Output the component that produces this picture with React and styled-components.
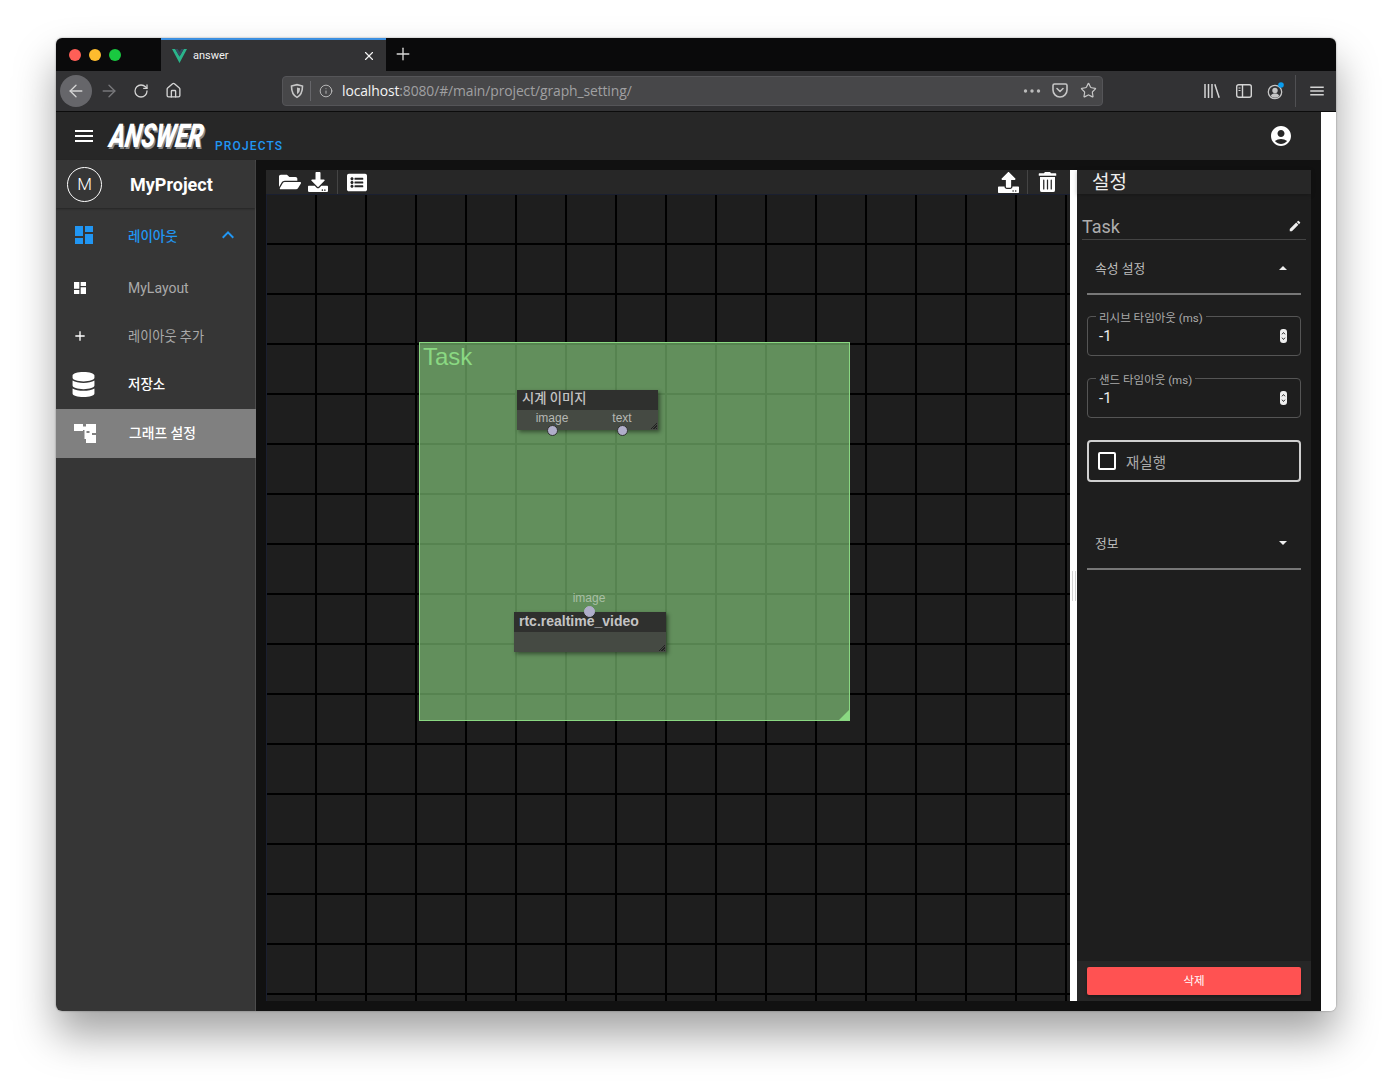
import React from 'react';
import styled, { createGlobalStyle } from 'styled-components';
import { ArrowLeft, ArrowRight, RotateCw, House, Star, Info, X, Plus } from 'lucide-react';
import { FaFolderOpen, FaDownload, FaUpload, FaListAlt, FaTrashAlt, FaDatabase } from 'react-icons/fa';
import { MdDashboard, MdExpandLess, MdAdd, MdAccountCircle, MdEdit, MdMenu } from 'react-icons/md';

const SANS = `Roboto, "Noto Sans CJK KR", sans-serif`;

const GlobalStyle = createGlobalStyle`
  html, body {
    margin: 0;
    background: #fff;
  }
  * {
    box-sizing: border-box;
  }
`;

const Page = styled.div`
  width: 1392px;
  height: 1085px;
  padding: 38px 56px 74px;
  background: #fff;
  font-family: ${SANS};
  overflow: hidden;
`;

const Win = styled.div`
  height: 973px;
  display: flex;
  flex-direction: column;
  border-radius: 6px;
  overflow: hidden;
  background: #fff;
  box-shadow: 0 24px 42px rgba(0, 0, 0, 0.36), 0 0 2px rgba(0, 0, 0, 0.4);
`;

const TabStrip = styled.div`
  height: 33px;
  flex: none;
  display: flex;
  align-items: stretch;
  background: #0a0a0b;
`;

const Lights = styled.div`
  width: 105px;
  padding-left: 13px;
  display: flex;
  align-items: center;
  gap: 8px;
`;

const Light = styled.span`
  width: 12px;
  height: 12px;
  border-radius: 50%;
  background: ${(p) => p.$color};
`;

const Tab = styled.div`
  width: 225px;
  display: flex;
  align-items: center;
  padding: 0 10px 0 11px;
  background: #323234;
  border-top: 2px solid #3c8fe0;
  color: #f2f2f2;
  font-size: 11px;
`;

const TabTitle = styled.span`
  margin-left: 6px;
  flex: 1;
`;

const NewTab = styled.div`
  width: 34px;
  padding-bottom: 2px;
  display: flex;
  align-items: center;
  justify-content: center;
  color: #d8d8d8;
`;

const NavBar = styled.div`
  height: 41px;
  flex: none;
  display: flex;
  align-items: center;
  padding: 0 0 1px 4px;
  background: #323234;
  border-bottom: 1px solid #0c0c0c;
`;

const NavButton = styled.div`
  width: ${(p) => p.$w || 32}px;
  height: 32px;
  margin-right: ${(p) => p.$gap || 0}px;
  flex: none;
  display: flex;
  align-items: center;
  justify-content: center;
  border-radius: 50%;
  color: ${(p) => (p.$dim ? '#77777a' : '#d4d4d4')};
  background: ${(p) => (p.$active ? '#66666a' : 'transparent')};
`;

const UrlBar = styled.div`
  width: 821px;
  height: 30px;
  margin: 0 93px 0 93px;
  flex: none;
  display: flex;
  align-items: center;
  padding-left: 6px;
  background: #474749;
  border: 1px solid #555558;
  border-radius: 4px;
  color: #c6c6c6;
`;

const UrlSep = styled.span`
  width: 1px;
  height: 20px;
  margin: 0 8px 0 5px;
  background: #66666a;
`;

const UrlText = styled.div`
  flex: 1;
  margin-left: 9px;
  font-family: "Open Sans", ${SANS};
  font-size: 13.9px;
  letter-spacing: -0.1px;
  color: #a0a0a2;
`;

const UrlHost = styled.span`
  color: #f4f4f4;
`;

const NavSep = styled.span`
  width: 1px;
  height: 32px;
  margin: 0 5px 0 3px;
  background: #505053;
`;

const Body = styled.div`
  flex: 1;
  min-height: 0;
  display: flex;
`;

const AppFrame = styled.div`
  width: 1265px;
  display: flex;
  flex-direction: column;
`;

const AppBar = styled.header`
  height: 48px;
  flex: none;
  display: flex;
  align-items: center;
  padding: 0 28px 0 16px;
  background: #272727;
  color: #fff;
`;

const Logo = styled.span`
  display: inline-block;
  width: 97px;
  margin-left: 14px;
  font-family: Roboto, sans-serif;
  font-size: 31px;
  font-weight: 900;
  font-style: italic;
  line-height: 32px;
  color: #fff;
  white-space: nowrap;
  transform: skewX(-8deg) scaleX(0.76) scaleY(1.06);
  transform-origin: left center;
  text-shadow: 2px 2px 0 #8a8a8a;
`;

const LogoSub = styled.span`
  margin: 20px 0 0 8px;
  font-size: 12px;
  font-weight: 500;
  letter-spacing: 1.15px;
  color: #2196f3;
`;

const Spacer = styled.div`
  flex: 1;
`;

const Columns = styled.div`
  flex: 1;
  min-height: 0;
  display: flex;
`;

const Sidebar = styled.aside`
  width: 200px;
  flex: none;
  background: #363636;
  border-right: 1px solid #4c4c4c;
  color: #fff;
`;

const ProjectRow = styled.div`
  height: 48px;
  display: flex;
  align-items: center;
  padding-left: 11px;
  box-shadow: 0 1px 2px rgba(0, 0, 0, 0.35);
`;

const Avatar = styled.div`
  width: 35px;
  height: 35px;
  display: flex;
  align-items: center;
  justify-content: center;
  border: 1px solid #fff;
  border-radius: 50%;
  font-size: 17px;
  font-weight: 300;
`;

const ProjectName = styled.div`
  margin-left: 28px;
  font-size: 18px;
  font-weight: 700;
`;

const MenuGroup = styled.nav`
  padding-top: 3px;
`;

const MenuRow = styled.div`
  height: ${(p) => p.$h || 48}px;
  padding-top: ${(p) => p.$pt || 0}px;
  margin-right: ${(p) => (p.$active ? -1 : 0)}px;
  display: flex;
  align-items: center;
  font-size: ${(p) => p.$size || 13.5}px;
  font-weight: ${(p) => (p.$strong ? 500 : 400)};
  color: ${(p) => p.$color || '#fff'};
  background: ${(p) => (p.$active ? '#808080' : 'transparent')};
`;

const MenuIcon = styled.span`
  width: ${(p) => p.$w || 72}px;
  padding-left: ${(p) => p.$pad || 18}px;
  flex: none;
  display: flex;
  align-items: center;
  color: ${(p) => p.$color || '#fff'};
`;

const MenuLabel = styled.span`
  flex: 1;
  padding-bottom: ${(p) => p.$lift || 0}px;
`;

const Chevron = styled.span`
  width: 39px;
  display: flex;
  color: #2196f3;
`;

const Main = styled.main`
  flex: 1;
  min-width: 0;
  display: flex;
  padding: 10px;
  background: #111;
`;

const Editor = styled.section`
  width: 804px;
  flex: none;
  display: flex;
  flex-direction: column;
`;

const Toolbar = styled.div`
  height: 24px;
  flex: none;
  display: flex;
  align-items: center;
  padding: 0 13px;
  background: #272727;
  color: #fff;
`;

const ToolButton = styled.span`
  display: flex;
  align-items: center;
  justify-content: center;
  width: ${(p) => p.$w}px;
`;

const ToolSep = styled.span`
  width: 1px;
  height: 24px;
  margin: 0 ${(p) => p.$right}px 0 ${(p) => p.$left}px;
  background: #444;
`;

const Canvas = styled.div`
  flex: 1;
  position: relative;
  overflow: hidden;
  background-color: #1e1e1e;
  background-image: linear-gradient(to right, #000 2px, transparent 2px),
    linear-gradient(to bottom, #000 2px, transparent 2px);
  background-size: 50px 50px;
  background-position: 48px 0, 0 48px;
  border-top: 1px solid #1a1f30;
  border-left: 1px solid #1a1f30;
`;

const Group = styled.div`
  position: absolute;
  left: 152px;
  top: 147px;
  width: 431px;
  height: 379px;
  padding: 0 3px;
  background: rgba(143, 218, 133, 0.6);
  border: 1px solid #8ad882;
  color: #8ad882;
  font-family: "Liberation Sans", sans-serif;
  font-size: 24px;
  line-height: 28px;

  &::after {
    content: '';
    position: absolute;
    right: 0;
    bottom: 0;
    border-style: solid;
    border-width: 0 0 10px 10px;
    border-color: transparent transparent #8ad882 transparent;
  }
`;

const Node = styled.div`
  position: absolute;
  left: ${(p) => p.$x}px;
  top: ${(p) => p.$y}px;
  width: ${(p) => p.$w}px;
  height: 40px;
  box-shadow: 2px 2px 4px rgba(0, 0, 0, 0.45);
  font-family: "Liberation Sans", "Noto Sans CJK KR", sans-serif;

  &::after {
    content: '';
    position: absolute;
    right: 1px;
    bottom: 1px;
    width: 7px;
    height: 7px;
    background: repeating-linear-gradient(135deg, transparent 0 1px, #222 1px 2px);
    clip-path: polygon(100% 0, 100% 100%, 0 100%);
  }
`;

const NodeTitle = styled.div`
  height: 20px;
  padding-left: 5px;
  background: #2f302e;
  color: #c4c4c4;
  font-family: ${(p) => (p.$ko ? SANS : 'inherit')};
  font-size: ${(p) => p.$size || 14}px;
  font-weight: ${(p) => (p.$ko ? 500 : 700)};
  line-height: ${(p) => (p.$ko ? 17 : 19)}px;
  white-space: nowrap;
`;

const NodeBody = styled.div`
  height: 20px;
  background: #454a43;
`;

const Port = styled.div`
  position: absolute;
  z-index: 1;
  left: ${(p) => p.$x}px;
  top: ${(p) => p.$y}px;
  width: 0;
  color: ${(p) => p.$color || '#b5b8b3'};
  font-size: 12px;
  line-height: 14px;
  display: flex;
  flex-direction: column;
  align-items: center;
  white-space: nowrap;
  transform: translateY(${(p) => (p.$in ? '-100%' : '0')});

  &::after {
    content: '';
    flex: none;
    width: 9px;
    height: 9px;
    border-radius: 50%;
    background: #b0aeca;
    border: 1px solid ${(p) => (p.$in ? '#b0aeca' : '#30332f')};
  }
`;

const PortLabel = styled.span`
  margin-bottom: ${(p) => p.$gap || 0}px;
`;

const Divider = styled.div`
  width: 7px;
  flex: none;
  display: flex;
  align-items: center;
  justify-content: center;
  background: #fff;
`;

const Grip = styled.span`
  width: 4px;
  height: 30px;
  border-left: 1px solid #d4d4d4;
  border-right: 1px solid #d4d4d4;
`;

const Panel = styled.section`
  width: 234px;
  flex: none;
  display: flex;
  flex-direction: column;
  background: #1e1e1e;
  color: #fff;
`;

const PanelHead = styled.div`
  height: 24px;
  flex: none;
  padding-left: 15px;
  background: #272727;
  font-size: 19px;
  line-height: 25px;
  color: #eee;
  box-shadow: 0 1px 4px rgba(0, 0, 0, 0.25);
`;

const PanelBody = styled.div`
  flex: 1;
  padding: 0 10px;
`;

const TaskRow = styled.div`
  height: 46px;
  margin: 0 -5px;
  padding: 19px 4px 0 0;
  display: flex;
  align-items: center;
  justify-content: space-between;
  border-bottom: 1px solid #444;
  color: #adadad;
  font-size: 18px;
`;

const EditIcon = styled.span`
  display: flex;
  margin-top: -1px;
  color: #eee;
`;

const SectionHead = styled.div`
  height: 55px;
  display: flex;
  align-items: center;
  justify-content: space-between;
  padding: 2px 14px 0 8px;
  border-bottom: 2px solid #777;
  color: #bdbdbd;
  font-size: 12.8px;
`;

const Caret = styled.span`
  width: 0;
  height: 0;
  border-left: 4px solid transparent;
  border-right: 4px solid transparent;
  ${(p) => (p.$up ? 'border-bottom: 4px solid #eee;' : 'border-top: 4px solid #eee;')}
`;

const Field = styled.fieldset`
  height: 48px;
  margin: ${(p) => p.$top}px 0 0;
  padding: 0 13px 0 8px;
  display: flex;
  align-items: center;
  justify-content: space-between;
  border: 1px solid #555;
  border-radius: 4px;
`;

const Legend = styled.legend`
  padding: 4px 3px 0;
  color: #aaa;
  font-size: 11.5px;
  line-height: 12px;
`;

const FieldRow = styled.div`
  display: flex;
  align-items: center;
  justify-content: space-between;
  width: 100%;
  height: 32px;
  margin-top: -7px;
  padding-left: 3px;
  font-size: 15px;
  color: #eee;
`;

const CheckField = styled.label`
  height: 42px;
  margin-top: 22px;
  display: flex;
  align-items: center;
  padding-left: 9px;
  border: 2px solid #cfcfcf;
  border-radius: 4px;
  color: #aaa;
  font-size: 14.5px;
`;

const CheckBox = styled.span`
  width: 18px;
  height: 18px;
  margin-right: 10px;
  border: 2px solid #fff;
  border-radius: 2px;
`;

const InfoHead = styled(SectionHead)`
  margin-top: 33px;
`;

const PanelFoot = styled.div`
  height: 40px;
  flex: none;
  padding: 6px 10px;
  background: #272727;
`;

const DeleteButton = styled.button`
  width: 100%;
  height: 28px;
  padding: 0 0 2px;
  border: 0;
  border-radius: 2px;
  background: #ff5252;
  color: #fff;
  font-family: ${SANS};
  font-size: 11.5px;
  box-shadow: 0 2px 3px rgba(0, 0, 0, 0.3);
`;

const ScrollGutter = styled.div`
  flex: 1;
  background: #fff;
`;

const VueLogo = () => (
  <svg width="15" height="14" viewBox="0 0 15 14">
    <path d="M0 0h3.2l4.3 7.6L11.8 0H15L7.5 14z" fill="#2bb48a" />
    <path d="M3.2 0h2.6l1.7 3 1.7-3h2.6L7.5 7.6z" fill="#35495e" />
  </svg>
);

const ShieldIcon = () => (
  <svg width="16" height="16" viewBox="0 0 16 16" fill="none" stroke="#c6c6c6" strokeWidth="1.6">
    <path d="M2.5 3 8 1.6 13.5 3c0 5-.8 9-5.500 11.400C3.300 12 2.500 8 2.500 3z" />
    <path d="M8 4.500 11 5.300c0 2.700-.7 4.500-3 6z" fill="#c6c6c6" stroke="none" />
  </svg>
);

const MoreDots = () => (
  <svg width="18" height="4" viewBox="0 0 18 4" fill="#bbb">
    <circle cx="2.500" cy="2" r="1.700" />
    <circle cx="9" cy="2" r="1.700" />
    <circle cx="15.500" cy="2" r="1.700" />
  </svg>
);

const PocketIcon = () => (
  <svg width="16" height="15" viewBox="0 0 16 15" fill="none" stroke="#c6c6c6" strokeWidth="1.6">
    <path d="M1 2.500C1 1.500 1.600 1 2.500 1h11c.9 0 1.500.5 1.500 1.500V7c0 3.700-3 7-7 7S1 10.700 1 7z" />
    <path d="M5 5.500 8 8.500l3-3" strokeLinecap="round" strokeLinejoin="round" />
  </svg>
);

const LibraryIcon = () => (
  <svg width="16" height="14" viewBox="0 0 16 14" stroke="#d4d4d4" strokeWidth="1.500" fill="none">
    <path d="M1 0v14M4.500 0v14M8 0v14M10.800.3 15.200 13.800" />
  </svg>
);

const SidebarIcon = () => (
  <svg width="16" height="14" viewBox="0 0 16 14" fill="none" stroke="#d4d4d4" strokeWidth="1.400">
    <rect x="0.700" y="0.700" width="14.600" height="12.600" rx="2" />
    <path d="M6.500 1v12" />
    <path d="M2.500 4h2M2.500 6.500h2" strokeWidth="1" />
  </svg>
);

const AccountIcon = () => (
  <svg width="20" height="20" viewBox="0 0 20 20" fill="none">
    <circle cx="9" cy="11" r="6.700" stroke="#c6c6c6" strokeWidth="1.300" />
    <circle cx="9" cy="9.500" r="2.700" fill="#c6c6c6" />
    <path d="M4.800 14.800C5.500 12.900 7 12.400 9 12.400s3.500.5 4.200 2.400C12 16.200 10.500 16.700 9 16.700s-3-.5-4.200-1.900z" fill="#c6c6c6" />
    <circle cx="15" cy="4" r="2.800" fill="#0a9ef0" />
  </svg>
);

const GraphIcon = () => (
  <svg width="22" height="19" viewBox="0 0 22 19" fill="#fff">
    <path d="M0 0h9v2.500h3V0h10v9h-4v2h4v8H12v-4h-1.500V6H9v1H0zM12 4.500v2H12.500V9h3V7H12z" />
  </svg>
);

const SpinnerIcon = () => (
  <svg width="7" height="14" viewBox="0 0 7 14">
    <rect width="7" height="14" rx="3" fill="#eee" />
    <path d="M2 5.300 3.500 3.500 5 5.300M2 8.700 3.500 10.500 5 8.700" fill="none" stroke="#333" strokeWidth="1" />
  </svg>
);

const NumberField = ({ label, top }) => (
  <Field $top={top}>
    <Legend>{label}</Legend>
    <FieldRow>
      -1
      <SpinnerIcon />
    </FieldRow>
  </Field>
);

const BrowserChrome = () => (
  <>
    <TabStrip>
      <Lights>
        <Light $color="#ff5f57" />
        <Light $color="#febc2e" />
        <Light $color="#19c840" />
      </Lights>
      <Tab>
        <VueLogo />
        <TabTitle>answer</TabTitle>
        <X size={14} color="#f2f2f2" strokeWidth={2} />
      </Tab>
      <NewTab>
        <Plus size={20} strokeWidth={1.6} />
      </NewTab>
    </TabStrip>
    <NavBar>
      <NavButton $active $gap={1}>
        <ArrowLeft size={20} strokeWidth={1.6} />
      </NavButton>
      <NavButton $dim>
        <ArrowRight size={20} strokeWidth={1.6} />
      </NavButton>
      <NavButton>
        <RotateCw size={16} strokeWidth={1.9} />
      </NavButton>
      <NavButton>
        <House size={17} strokeWidth={1.9} />
      </NavButton>
      <UrlBar>
        <ShieldIcon />
        <UrlSep />
        <Info size={14} strokeWidth={1.5} />
        <UrlText>
          <UrlHost>localhost</UrlHost>:8080/#/main/project/graph_setting/
        </UrlText>
        <NavButton $w={28}>
          <MoreDots />
        </NavButton>
        <NavButton $w={28}>
          <PocketIcon />
        </NavButton>
        <NavButton $w={28}>
          <Star size={17} strokeWidth={1.7} color="#c6c6c6" />
        </NavButton>
      </UrlBar>
      <NavButton>
        <LibraryIcon />
      </NavButton>
      <NavButton>
        <SidebarIcon />
      </NavButton>
      <NavButton>
        <AccountIcon />
      </NavButton>
      <NavSep />
      <NavButton>
        <MdMenu size={18} />
      </NavButton>
    </NavBar>
  </>
);

const SideMenu = () => (
  <Sidebar>
    <ProjectRow>
      <Avatar>M</Avatar>
      <ProjectName>MyProject</ProjectName>
    </ProjectRow>
    <MenuGroup>
      <MenuRow $color="#2196f3" $strong>
        <MenuIcon $color="#2196f3" $pad={16}>
          <MdDashboard size={24} />
        </MenuIcon>
        <MenuLabel>레이아웃</MenuLabel>
        <Chevron>
          <MdExpandLess size={24} />
        </Chevron>
      </MenuRow>
      <MenuRow $color="#aaa" $h={53} $pt={5} $size={14}>
        <MenuIcon $pad={16}>
          <MdDashboard size={16} />
        </MenuIcon>
        <MenuLabel>MyLayout</MenuLabel>
      </MenuRow>
      <MenuRow $color="#aaa" $size={13.2}>
        <MenuIcon $pad={16}>
          <MdAdd size={16} />
        </MenuIcon>
        <MenuLabel $lift={2}>레이아웃 추가</MenuLabel>
      </MenuRow>
      <MenuRow $strong $h={49}>
        <MenuIcon $pad={15}>
          <FaDatabase size={25} />
        </MenuIcon>
        <MenuLabel $lift={3}>저장소</MenuLabel>
      </MenuRow>
      <MenuRow $strong $active $h={49} $size={13.8}>
        <MenuIcon $w={73}>
          <GraphIcon />
        </MenuIcon>
        <MenuLabel $lift={3}>그래프 설정</MenuLabel>
      </MenuRow>
    </MenuGroup>
  </Sidebar>
);

const GraphEditor = () => (
  <Editor>
    <Toolbar>
      <ToolButton $w={22}>
        <FaFolderOpen size={22} />
      </ToolButton>
      <ToolButton $w={34}>
        <FaDownload size={20} />
      </ToolButton>
      <ToolSep $left={2} $right={9} />
      <ToolButton $w={20}>
        <FaListAlt size={21} />
      </ToolButton>
      <Spacer />
      <ToolButton $w={22}>
        <FaUpload size={21} />
      </ToolButton>
      <ToolSep $left={8} $right={10} />
      <ToolButton $w={19}>
        <FaTrashAlt size={20} />
      </ToolButton>
    </Toolbar>
    <Canvas>
      <Group>
        Task
        <Node $x={97} $y={47} $w={141}>
          <NodeTitle $ko $size={13.3}>시계 이미지</NodeTitle>
          <NodeBody />
          <Port $x={35} $y={21}>
            <PortLabel>image</PortLabel>
          </Port>
          <Port $x={105} $y={21}>
            <PortLabel>text</PortLabel>
          </Port>
        </Node>
        <Node $x={94} $y={269} $w={152}>
          <NodeTitle>rtc.realtime_video</NodeTitle>
          <NodeBody />
          <Port $in $x={75} $y={5} $color="#a9bfa5">
            <PortLabel $gap={1}>image</PortLabel>
          </Port>
        </Node>
      </Group>
    </Canvas>
  </Editor>
);

const SettingsPanel = () => (
  <Panel>
    <PanelHead>설정</PanelHead>
    <PanelBody>
      <TaskRow>
        Task
        <EditIcon>
          <MdEdit size={14} />
        </EditIcon>
      </TaskRow>
      <SectionHead>
        속성 설정
        <Caret $up />
      </SectionHead>
      <NumberField label="리시브 타임아웃 (ms)" top={13} />
      <NumberField label="샌드 타임아웃 (ms)" top={14} />
      <CheckField>
        <CheckBox />
        재실행
      </CheckField>
      <InfoHead>
        정보
        <Caret />
      </InfoHead>
    </PanelBody>
    <PanelFoot>
      <DeleteButton>삭제</DeleteButton>
    </PanelFoot>
  </Panel>
);

const App = () => (
  <>
    <GlobalStyle />
    <Page>
      <Win>
        <BrowserChrome />
        <Body>
          <AppFrame>
            <AppBar>
              <MdMenu size={24} />
              <Logo>ANSWER</Logo>
              <LogoSub>PROJECTS</LogoSub>
              <Spacer />
              <MdAccountCircle size={24} />
            </AppBar>
            <Columns>
              <SideMenu />
              <Main>
                <GraphEditor />
                <Divider>
                  <Grip />
                </Divider>
                <SettingsPanel />
              </Main>
            </Columns>
          </AppFrame>
          <ScrollGutter />
        </Body>
      </Win>
    </Page>
  </>
);

export default App;
